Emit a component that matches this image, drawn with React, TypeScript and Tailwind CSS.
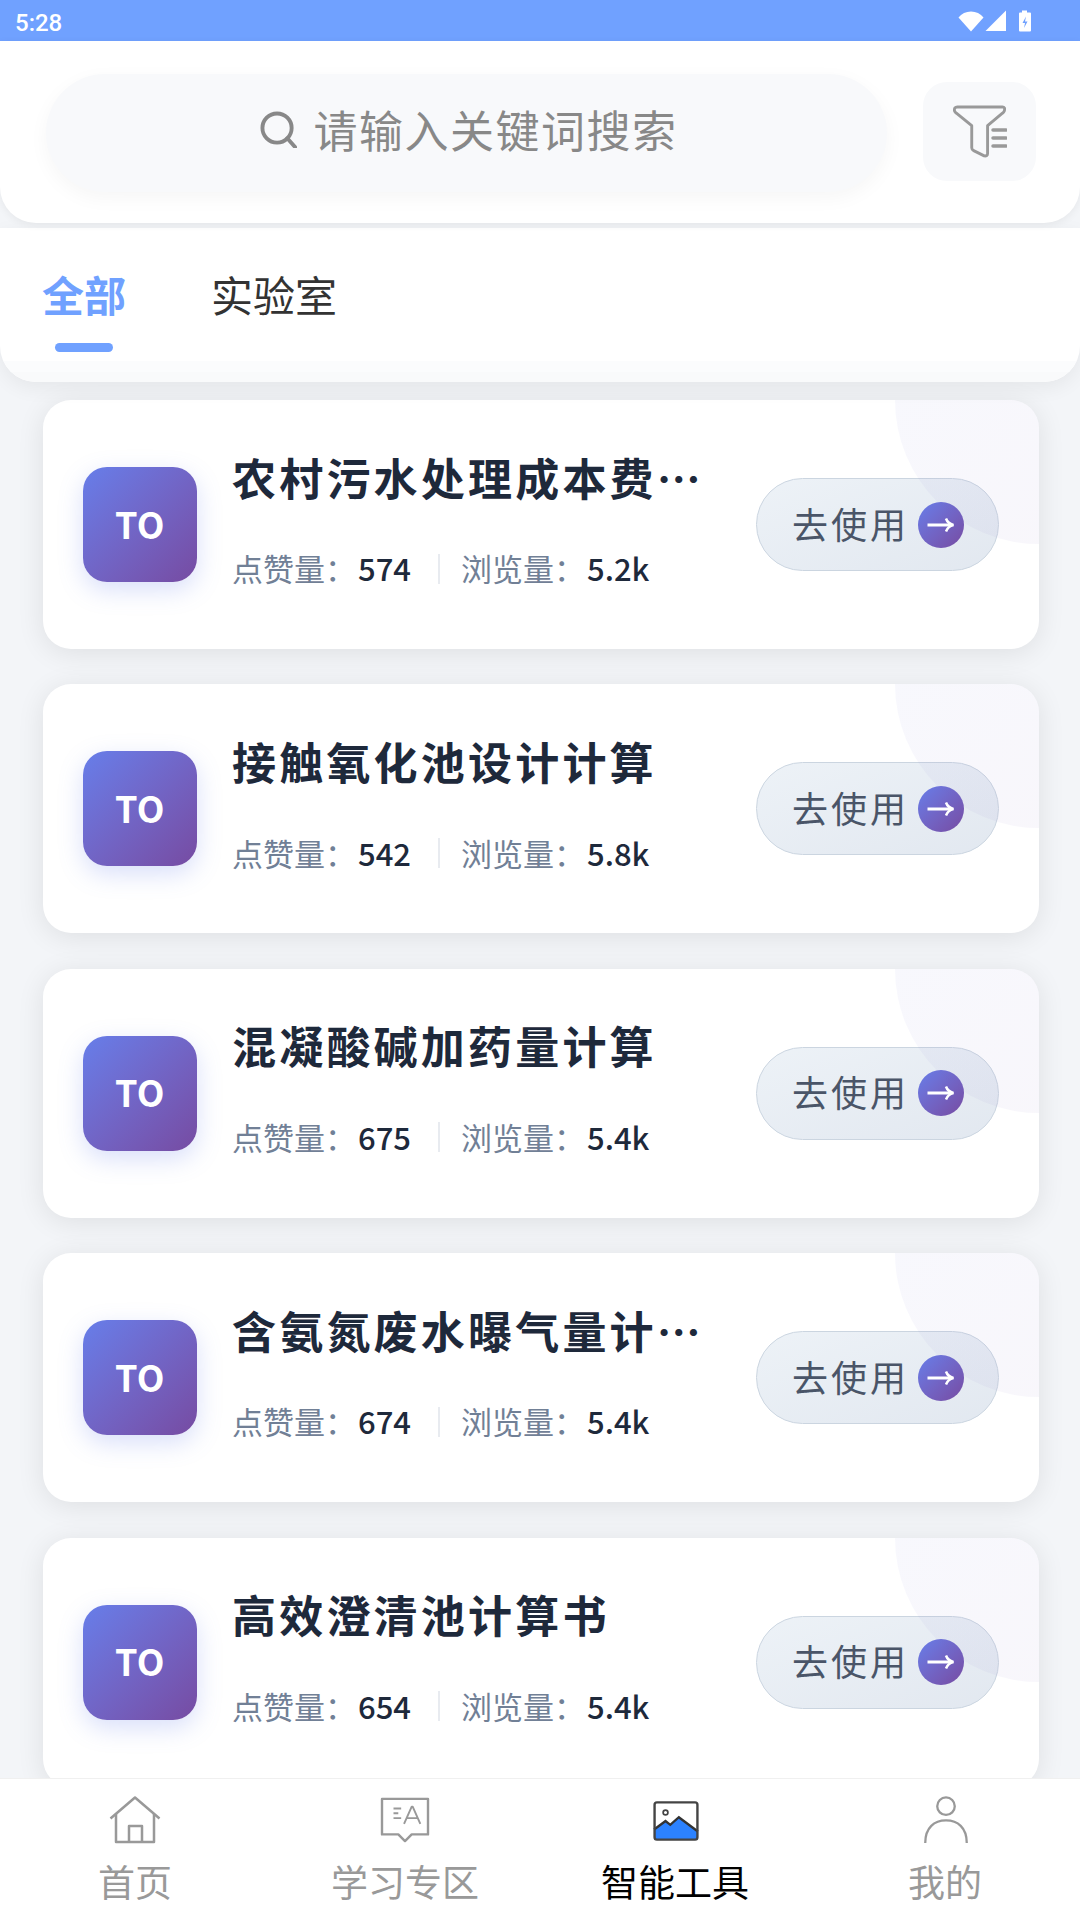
import React from 'react';

const TOOLS = [
  { title: '农村污水处理成本费用计算', likes: '574', views: '5.2k' },
  { title: '接触氧化池设计计算', likes: '542', views: '5.8k' },
  { title: '混凝酸碱加药量计算', likes: '675', views: '5.4k' },
  { title: '含氨氮废水曝气量计算书', likes: '674', views: '5.4k' },
  { title: '高效澄清池计算书', likes: '654', views: '5.4k' },
];

const FONT = "font-['Noto_Sans_CJK_SC','Noto_Sans',sans-serif]";

const StatusIcons = () => (
  <div className="flex items-center">
    <svg width="26" height="22" viewBox="0 0 26 22" fill="white"><path d="M0.5 7.5C3.5 3.5 8 1.5 13 1.5s9.500 2 12.500 6L13 21.500z" /></svg>
    <svg width="22" height="22" viewBox="0 0 22 22" fill="white" className="ml-[1px]"><path d="M21 0.500V21H0.500z" /></svg>
    <svg width="14" height="22" viewBox="0 0 14 22" className="ml-[11px]">
      <path fill="white" d="M4 0.500h5V2.500h3a1 1 0 0 1 1 1V20.500a1 1 0 0 1-1 1H2a1 1 0 0 1-1-1V3.500a1 1 0 0 1 1-1h2z" />
      <path fill="#70a1ff" d="M8 6.500 4.500 13h2.500L6 18l3.500-6.500H7z" />
    </svg>
  </div>
);

const FilterIcon = () => (
  <svg width="54" height="54" viewBox="0 0 54 54" fill="none" stroke="#999999" strokeWidth="3" strokeLinecap="round" strokeLinejoin="round">
    <path d="M4 1.500h47q3 0 2 4q-.5 1.500-2 2.500L35.500 21v29q0 3-3.500 2.500L21 47q-2-1-2-3V21L3 8q-1.500-1-2-2.500q-.5-4 3-4z" transform="translate(0.500 0.500) scale(.96)" />
    <path d="M40 25h13M40 33h13M40 41h13" strokeWidth="3.500" />
  </svg>
);

const ArrowIcon = () => (
  <svg width="28" height="18" viewBox="0 0 28 18" fill="none" stroke="white" strokeWidth="3" strokeLinejoin="miter">
    <path d="M0.500 9H25" />
    <path d="M19 2.500c1 3 3.500 5.500 7.500 6.500c-4 1-6.500 3.500-7.500 6.500" strokeWidth="2.500" />
  </svg>
);

const ToolCard = ({ title, likes, views }: { title: string; likes: string; views: string }) => (
  <div className="relative flex h-[249px] w-[996px] shrink-0 items-center overflow-hidden rounded-[28px] bg-white pl-[40px] shadow-[0_4px_28px_rgba(0,0,0,0.09)]">
    <div className="flex h-[115px] w-[114px] shrink-0 items-center justify-center rounded-[24px] bg-gradient-to-br from-[#667eea] to-[#764ba2] pb-[4px] text-[36px] font-bold tracking-[0.5px] text-white shadow-[0_8px_24px_rgba(102,126,234,0.25)]">
      TO
    </div>
    <div className="ml-[35px] w-[475px]">
      <p className="-mt-[6px] truncate text-[44px] leading-[66px] font-bold tracking-[3.2px] text-[#1e293b]">{title}</p>
      <div className="mt-[30px] flex h-[60px] items-center pb-[2px] text-[31px]">
        <span className="w-[126px] text-[#718096]">点赞量：</span>
        <span className="w-[80px] font-medium text-[#1e293b]">{likes}</span>
        <span className="h-[30px] w-[2px] bg-[#e8ebf0]" />
        <span className="ml-[21px] w-[126px] text-[#718096]">浏览量：</span>
        <span className="font-medium text-[#1e293b]">{views}</span>
      </div>
    </div>
    <button className="ml-[49px] flex h-[93px] w-[243px] shrink-0 items-center rounded-full border border-[#cbd5e0] bg-gradient-to-br from-[#edf2f7] to-[#e2e8f0] pl-[35px] text-[36px] tracking-[3px] text-[#4a5568]">
      <span className="pb-[4px]">去使用</span>
      <span className="ml-[9px] flex h-[46px] w-[46px] items-center justify-center rounded-full bg-gradient-to-br from-[#667eea] to-[#764ba2]">
        <ArrowIcon />
      </span>
    </button>
    {/* corner tint sits over the button */}
    <div className="pointer-events-none absolute -top-[144px] -right-[144px] h-[288px] w-[288px] rounded-full bg-gradient-to-br from-[#667eea]/5 to-[#764ba2]/5" />
  </div>
);

const NavItem = ({ label, active, children }: { label: string; active?: boolean; children: React.ReactNode }) => (
  <div className="flex flex-col items-center">
    <div className="flex h-[50px] w-[60px] items-end justify-center">{children}</div>
    <span className={`mt-[11px] h-[46px] overflow-hidden text-[37px] leading-[52px] ${active ? 'text-black' : 'text-[#999999]'}`}>{label}</span>
  </div>
);

export default function App() {
  return (
    <div className={`flex h-[1920px] w-[1080px] flex-col overflow-hidden bg-[#f3f5f8] ${FONT}`}>
      <div className="flex h-[41px] shrink-0 items-center justify-between bg-[#70a1ff] pr-[48px] pl-[15px]">
        <span className="pt-[4px] font-['Roboto',sans-serif] text-[24px] font-medium text-white">5:28</span>
        <StatusIcons />
      </div>

      {/* search */}
      <div className="z-20 flex h-[182px] shrink-0 items-start rounded-b-[36px] bg-white pt-[33px] pl-[46px] shadow-[0_2px_8px_rgba(0,0,0,0.06)]">
        <div className="flex h-[118px] w-[841px] items-center justify-center rounded-full bg-[#f8f9fb] pb-[8px] pl-[4px] shadow-[0_6px_20px_rgba(0,0,0,0.04)]">
          <svg width="37" height="37" viewBox="0 0 38 38" fill="none" stroke="#888888" strokeWidth="4">
            <circle cx="17.500" cy="17.500" r="15" />
            <path d="M28 28l8 9" strokeLinecap="round" />
          </svg>
          <span className="ml-[17px] text-[44px] leading-none tracking-[1.5px] text-[#888888]">请输入关键词搜索</span>
        </div>
        <div className="mt-[8px] ml-[36px] flex h-[99px] w-[113px] items-center justify-center rounded-[24px] bg-[#f8f9fb]">
          <FilterIcon />
        </div>
      </div>

      {/* tabs */}
      <div className="z-10 mt-[5px] flex h-[154px] shrink-0 flex-col overflow-hidden rounded-b-[36px] bg-white shadow-[0_6px_20px_rgba(0,0,0,0.06)]">
        <div className="flex h-[133px] shrink-0 items-start pt-[40px] pl-[42px]">
          <div className="flex w-[84px] flex-col items-center">
            <span className="h-[60px] text-[42px] leading-[52px] font-bold text-[#70a1ff]">全部</span>
            <span className="mt-[15px] h-[9px] w-[58px] rounded-full bg-[#70a1ff]" />
          </div>
          <span className="ml-[85px] text-[42px] leading-[52px] text-[#333333]">实验室</span>
        </div>
        <div className="h-[11px] shrink-0 bg-[#fbfcfd]" />
        <div className="flex-1 bg-[#f9fafb]" />
      </div>

      {/* tool cards */}
      <div className="flex min-h-0 flex-1 flex-col gap-[35.4px] overflow-hidden pt-[18px] pl-[43px]">
        {TOOLS.map((t) => (
          <ToolCard key={t.title} {...t} />
        ))}
      </div>

      {/* bottom nav */}
      <div className="grid h-[142px] shrink-0 grid-cols-4 border-t border-[#f0f0f0] bg-white pt-[15px]">
        <NavItem label="首页">
          <svg width="52" height="48" viewBox="0 0 52 48" fill="none" stroke="#999999" strokeWidth="2.500" strokeLinejoin="round">
            <path d="M1.500 22.500 26 1.500l24.500 21" />
            <path d="M7 18v28h38V18" />
            <path d="M20 46V30h13v16" />
          </svg>
        </NavItem>
        <NavItem label="学习专区">
          <svg width="50" height="46" viewBox="0 0 52 48" fill="none" stroke="#999999" strokeWidth="2.500" strokeLinejoin="round" className="mb-[1px]">
            <path d="M2 2h48v37H33l-7 7-7-7H2z" />
            <path d="M14 12h8M14 17h5M14 22h8" strokeWidth="2" />
            <path d="M25 28l8-18h1l8 18M28 22h11" strokeWidth="2" />
          </svg>
        </NavItem>
        <NavItem label="智能工具" active>
          <svg width="46" height="40" viewBox="0 0 48 42" fill="none" className="mb-[3px] ml-[2px]">
            <path d="M1 30 13 21l5 4 9-8 20 15v7a2 2 0 0 1-2 2H3a2 2 0 0 1-2-2z" fill="#2c82ff" />
            <path d="M1 30 13 21l5 4 9-8 20 15" stroke="#333333" strokeWidth="2.500" />
            <rect x="1.500" y="1.500" width="45" height="39" rx="2.500" stroke="#444444" strokeWidth="2.500" />
            <circle cx="13" cy="12" r="2.500" stroke="#444444" strokeWidth="1.800" />
          </svg>
        </NavItem>
        <NavItem label="我的">
          <svg width="48" height="48" viewBox="0 0 48 52" fill="none" stroke="#999999" strokeWidth="2.500" className="ml-[2px]">
            <circle cx="24" cy="11" r="9.500" />
            <path d="M1.500 51c0-17 10-24.500 22.500-24.500S46.500 34 46.500 51" />
          </svg>
        </NavItem>
      </div>
    </div>
  );
}
